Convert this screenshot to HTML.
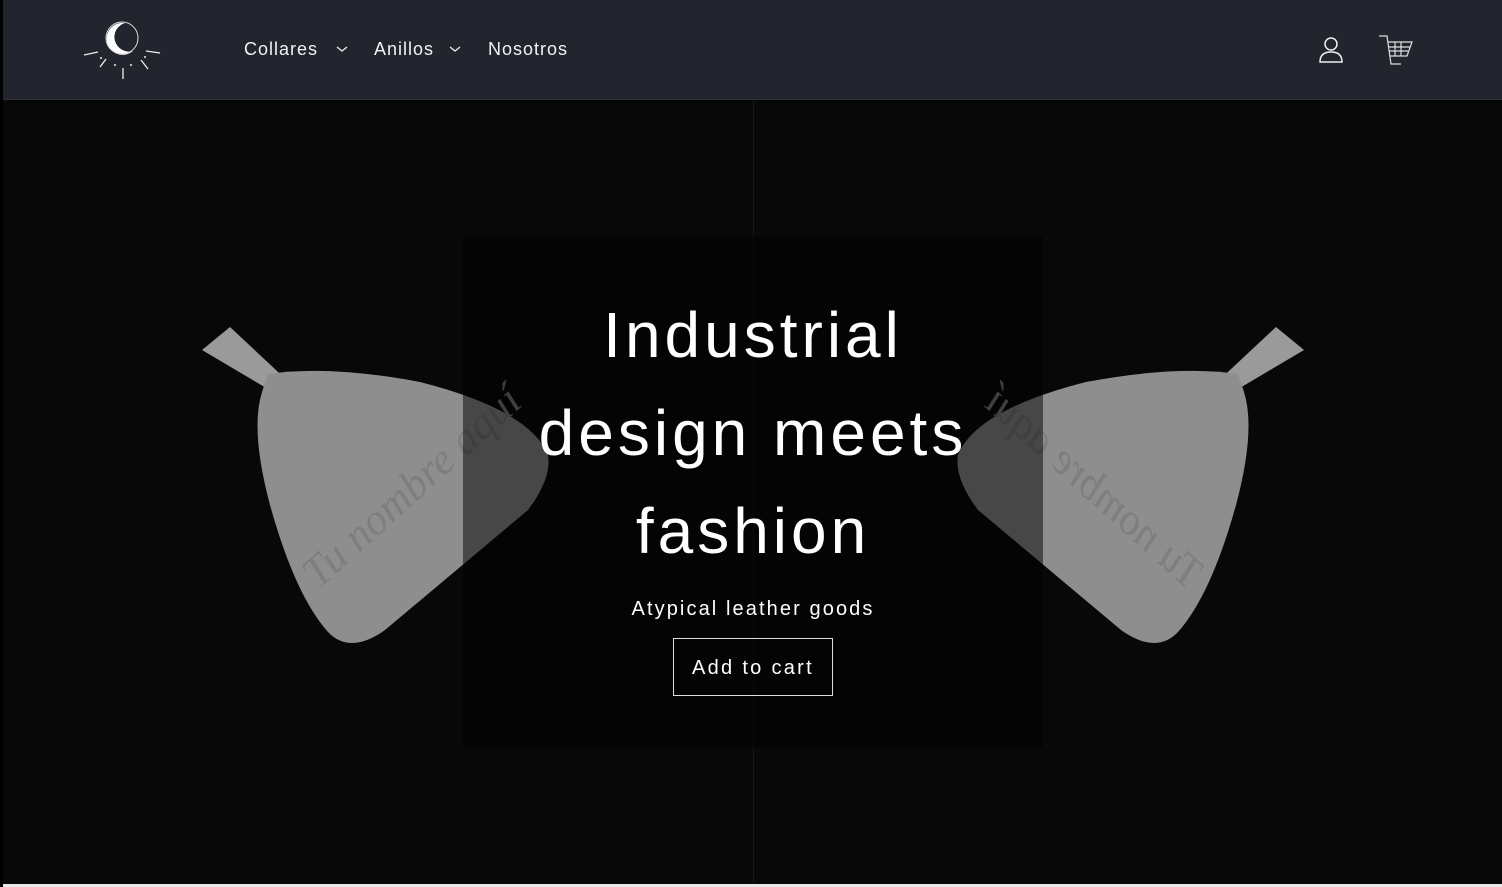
<!DOCTYPE html>
<html><head><meta charset="utf-8"><style>
*{margin:0;padding:0;box-sizing:border-box}
html,body{width:1502px;height:887px;overflow:hidden;background:#000;font-family:"Liberation Sans",sans-serif}
#hdr{position:absolute;left:3px;top:0;width:1499px;height:100px;background:#22252d;border-bottom:1px solid #2d3038}
#hero{position:absolute;left:3px;top:100px;width:1499px;height:784px;background:#080808}
#foot{position:absolute;left:3px;top:884px;width:1499px;height:3px;background:#e8e8e8}
.nav{position:absolute;top:39px;color:#f2f2f2;font-size:18px;letter-spacing:1px}
.box{position:absolute;left:463px;top:236px;width:580px;height:512px;background:rgba(0,0,0,0.5)}
h1{position:absolute;left:463px;width:580px;top:286px;text-align:center;color:#fff;font-weight:400;font-size:64px;line-height:98px;letter-spacing:4px}
.sub{position:absolute;left:463px;width:580px;top:598px;text-align:center;color:#fff;font-size:20px;letter-spacing:2.1px}
.btn{position:absolute;left:673px;top:638px;width:160px;height:58px;border:1px solid #ddd;color:#fff;font-size:20px;letter-spacing:2.3px;text-align:center;line-height:58px}
</style></head><body>
<div id="hdr">
<svg style="position:absolute;left:78px;top:15px" width="80" height="70" viewBox="0 0 80 70">
<path d="M44 8 A16 16 0 1 0 52 36 A13 13 0 1 1 44 8 Z" fill="#fff"/>
<circle cx="41" cy="23" r="16" fill="none" stroke="#ddd" stroke-width="1"/>
<g stroke="#eee" stroke-width="1.3" fill="none">
<line x1="3" y1="40" x2="17" y2="37"/><line x1="65" y1="36" x2="79" y2="38"/>
<line x1="19" y1="52" x2="25" y2="44"/><line x1="60" y1="45" x2="67" y2="54"/>
<line x1="42" y1="53" x2="42" y2="64"/></g>
<g fill="#eee"><circle cx="20" cy="43" r="1"/><circle cx="64" cy="42" r="1"/><circle cx="34" cy="50" r="1"/><circle cx="50" cy="50" r="1"/></g>
</svg>
<div class="nav" style="left:241px">Collares</div>
<svg style="position:absolute;left:333px;top:45px" width="12" height="8"><path d="M1 2 L6 6 L11 2" stroke="#eee" fill="none" stroke-width="1.3"/></svg>
<div class="nav" style="left:371px">Anillos</div>
<svg style="position:absolute;left:446px;top:45px" width="12" height="8"><path d="M1 2 L6 6 L11 2" stroke="#eee" fill="none" stroke-width="1.3"/></svg>
<div class="nav" style="left:485px">Nosotros</div>
<svg style="position:absolute;left:1315px;top:36px" width="26" height="28"><circle cx="13" cy="8" r="6" stroke="#eee" fill="none" stroke-width="1.5"/><path d="M2 26 Q2 16 13 16 Q24 16 24 26 Z" stroke="#eee" fill="none" stroke-width="1.5"/></svg>
<svg style="position:absolute;left:1375px;top:34px" width="36" height="32" viewBox="0 0 36 32"><g stroke="#ddd" fill="none" stroke-width="1.2"><path d="M1 2 H9 L13 30 H23"/><path d="M10 8 H34 L29 22 H12"/><path d="M11 13 H32 M11 17 H30 M17 8 V22 M23 8 V22"/></g></svg>
</div>
<div id="hero">
<div style="position:absolute;left:750px;top:0;width:1px;height:784px;background:#161616"></div>
<svg style="position:absolute;left:0;top:0" width="1499" height="784" viewBox="3 100 1499 784">
<g id="p">
<path d="M202 350 L230 327 L292 385 L278 395 Z" fill="#9a9a9a"/>
<path d="M268 374 Q330 365 420 382 Q530 410 548 455 Q552 478 528 510 L385 630 Q350 655 328 632 Q295 595 270 505 Q250 430 262 392 Z" fill="#8e8e8e"/>
<text x="318" y="590" transform="rotate(-42 318 590)" fill="#7e7e7e" font-family="Liberation Serif" font-style="italic" font-size="44">Tu nombre aquí</text>
</g>
<use href="#p" transform="translate(1506 0) scale(-1 1)"/>
</svg>
</div>
<div class="box"></div>
<h1>Industrial<br>design meets<br>fashion</h1>
<div class="sub">Atypical leather goods</div>
<div class="btn">Add to cart</div>
<div id="foot"></div>
</body></html>
